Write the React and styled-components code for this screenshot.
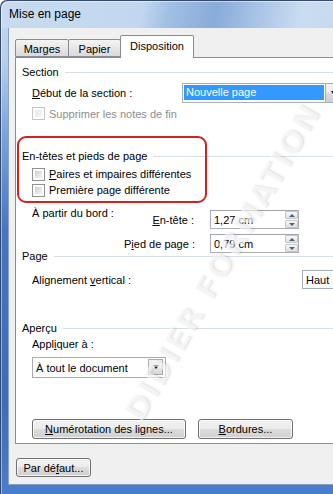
import React from "react";
import styled, { createGlobalStyle } from "styled-components";

const Global = createGlobalStyle`
  html, body { margin: 0; padding: 0; overflow: hidden; background: #ffffff; }
  body { font-family: "Liberation Sans", Arial, sans-serif; font-size: 11px; color: #000; }
  * { box-sizing: border-box; }
`;

const Window = styled.div`
  position: relative;
  width: 430px;
  height: 494px;
  overflow: hidden;
  border-top-left-radius: 7px;
  display: flex;
  flex-direction: column;
  background: linear-gradient(180deg, #c4d9f0 0px, #b7cfec 60px, #7ea6dc 130px, #4376c6 230px, #3a6cc0 400px, #4a7dcb 494px);
  box-shadow: inset 1px 1px 0 #34496b, inset 2px 2px 0 rgba(255, 255, 255, 0.45);
`;

const TitleBar = styled.div`
  height: 28px;
  flex: none;
  padding-left: 9px;
  display: flex;
  align-items: center;
  font-size: 12px;
  color: #000;
  border-top-left-radius: 7px;
  background: linear-gradient(100deg, #c8dbf0 0%, #c2d7ef 33%, #a3c0e4 39%, #88abd9 50%, #a6c2e5 59%, #cadcf1 70%, #bdd3ed 100%);
  box-shadow: inset 1px 1px 0 #34496b, inset 2px 2px 0 rgba(255, 255, 255, 0.5);
`;

const Client = styled.div`
  flex: none;
  height: 457px;
  margin-left: 8px;
  background: #f0f0f0;
  border-left: 1px solid #8aa0bd;
  border-bottom: 1px solid #8aa0bd;
  padding: 7px 0 0 6px;
  display: flex;
  flex-direction: column;
`;

const TabStrip = styled.div`
  display: flex;
  align-items: flex-end;
  height: 22px;
  position: relative;
  z-index: 2;
`;

const Tab = styled.div`
  width: ${(p) => p.$w}px;
  height: ${(p) => (p.$active ? 23 : 18)}px;
  margin-left: ${(p) => (p.$first ? 0 : -1)}px;
  margin-bottom: ${(p) => (p.$active ? -1 : 0)}px;
  border: 1px solid #898c95;
  border-bottom: ${(p) => (p.$active ? "none" : "1px solid #898c95")};
  border-radius: 2px 2px 0 0;
  background: ${(p) => (p.$active ? "#ffffff" : "linear-gradient(180deg, #f4f4f4 0%, #e8e8e8 45%, #dadada 100%)")};
  display: flex;
  align-items: center;
  justify-content: center;
  padding-top: ${(p) => (p.$active ? 0 : 2)}px;
  padding-bottom: ${(p) => (p.$active ? 3 : 0)}px;
  font-size: 11px;
  position: relative;
  z-index: ${(p) => (p.$active ? 2 : 1)};
`;

const Panel = styled.div`
  position: relative;
  z-index: 1;
  height: 387px;
  background: #ffffff;
  border: 1px solid #898c95;
  border-right: none;
  padding-left: 6px;
  display: flex;
  flex-direction: column;
`;

const GroupHeading = styled.div`
  display: flex;
  align-items: center;
  height: 14px;
  margin-top: ${(p) => p.$top}px;
  &::after {
    content: "";
    flex: 1;
    height: 1px;
    margin-left: 6px;
    background: #d5dfe5;
  }
`;

const Row = styled.div`
  display: flex;
  align-items: ${(p) => p.$align || "center"};
  height: ${(p) => p.$h}px;
  margin-top: ${(p) => p.$top}px;
  padding-left: 10px;
`;

const Label = styled.span`
  width: ${(p) => (p.$w ? `${p.$w}px` : "auto")};
  flex: none;
  line-height: 14px;
  white-space: nowrap;
  color: ${(p) => (p.$disabled ? "#8d8d8d" : "#000")};
  padding-top: ${(p) => p.$pt || 0}px;
  text-align: ${(p) => (p.$right ? "right" : "left")};
`;

const U = styled.span`
  text-decoration: underline;
  text-underline-offset: 1px;
`;

const ListCombo = styled.div`
  width: 161px;
  height: 20px;
  border: 1px solid #a5acb5;
  background: #ffffff;
  display: flex;
  padding: 1px 0 2px 1px;
`;

const Highlight = styled.div`
  flex: 1;
  background: #3399ff;
  color: #ffffff;
  padding-left: 2px;
  line-height: 15px;
  margin-right: 1px;
`;

const ComboArrow = styled.div`
  width: 17px;
  margin-top: -1px;
  margin-bottom: -2px;
  border-left: 1px solid #a5acb5;
  background: linear-gradient(180deg, #f2f2f2 0%, #ebebeb 50%, #dddddd 50%, #cfcfcf 100%);
  display: flex;
  align-items: center;
  justify-content: center;
`;

const Caret = styled.span`
  width: 0;
  height: 0;
  border-left: 3.5px solid transparent;
  border-right: 3.5px solid transparent;
  border-top: 4px solid #000;
`;

const CheckBox = styled.span`
  width: 13px;
  height: 13px;
  flex: none;
  border: 1px solid ${(p) => (p.$disabled ? "#c5c5c5" : "#8e8f8f")};
  background: #ffffff;
  padding: 2px;
  margin-right: 4px;
  &::after {
    content: "";
    display: block;
    width: 100%;
    height: 100%;
    background: ${(p) =>
      p.$disabled
        ? "linear-gradient(135deg, #e6e6e6, #f8f8f8)"
        : "linear-gradient(135deg, #cbcbcb 0%, #e2e2e2 50%, #f6f6f6 100%)"};
  }
`;

const Annotation = styled.div`
  position: absolute;
  left: 1px;
  top: 78px;
  width: 190px;
  height: 67px;
  border: 2px solid #d2231f;
  border-radius: 9px;
  pointer-events: none;
`;

const EdgeBlock = styled.div`
  display: flex;
  margin-top: ${(p) => p.$top}px;
  padding-left: 10px;
`;

const EdgeGrid = styled.div`
  display: grid;
  grid-template-columns: 70px 89px;
  column-gap: 16px;
  row-gap: 5px;
  margin-top: 4px;
  align-items: center;
`;

const SpinBox = styled.div`
  width: 89px;
  height: 19px;
  border: 1px solid #abadb3;
  border-top-color: #a0a3aa;
  background: #ffffff;
  display: flex;
  align-items: center;
  padding-left: 3px;
`;

const SpinText = styled.span`
  flex: 1;
  line-height: 14px;
`;

const SpinCol = styled.div`
  display: flex;
  flex-direction: column;
  width: 13px;
  height: 17px;
  gap: 1px;
`;

const SpinBtn = styled.div`
  flex: 1;
  border: 1px solid #c2c6cc;
  border-radius: 1px;
  background: linear-gradient(180deg, #f8f8f8 0%, #ececec 50%, #e0e0e0 100%);
  display: flex;
  align-items: center;
  justify-content: center;
`;

const TinyTri = styled.span`
  width: 0;
  height: 0;
  border-left: 3px solid transparent;
  border-right: 3px solid transparent;
  ${(p) => (p.$up ? "border-bottom: 3px solid #4d6185;" : "border-top: 3px solid #4d6185;")}
`;

const ValueBox = styled.div`
  width: ${(p) => p.$w}px;
  height: ${(p) => p.$h}px;
  border: 1px solid #a5acb5;
  background: #ffffff;
  display: flex;
  align-items: stretch;
  padding-left: 3px;
`;

const ValueText = styled.span`
  flex: 1;
  display: flex;
  align-items: center;
`;

const DropBtn = styled.div`
  width: 15px;
  margin: 1px 2px 2px 0;
  border: 1px solid #a5acb5;
  background: linear-gradient(180deg, #f4f4f4 0%, #e8e8e8 50%, #d9d9d9 100%);
  display: flex;
  align-items: center;
  justify-content: center;
`;

const ButtonRow = styled.div`
  display: flex;
  gap: 12px;
  margin-top: ${(p) => p.$top}px;
  padding-left: ${(p) => p.$pl || 0}px;
`;

const Button = styled.div`
  width: ${(p) => p.$w}px;
  height: ${(p) => p.$h || 20}px;
  border: 1px solid #707070;
  border-radius: 3px;
  background: linear-gradient(180deg, #f2f2f2 0%, #ebebeb 50%, #dddddd 50%, #cfcfcf 100%);
  box-shadow: inset 0 0 0 1px rgba(255, 255, 255, 0.75);
  display: flex;
  align-items: center;
  justify-content: center;
  font-size: 11px;
  white-space: nowrap;
`;

const Watermark = styled.div`
  position: absolute;
  left: 222px;
  top: 262px;
  transform: translate(-50%, -50%) rotate(-60deg);
  white-space: nowrap;
  font-family: "DejaVu Sans", sans-serif;
  font-weight: bold;
  font-size: 30px;
  letter-spacing: 2px;
  color: rgba(255, 255, 255, 0.6);
  text-shadow: 1px 1px 0 rgba(170, 170, 170, 0.16), 2px 2px 2px rgba(150, 150, 150, 0.14);
  pointer-events: none;
  z-index: 5;
`;

export default function App() {
  return (
    <>
      <Global />
      <Window>
        <TitleBar>Mise en page</TitleBar>
        <Client>
          <TabStrip>
            <Tab $w={54} $first>Marges</Tab>
            <Tab $w={53}>Papier</Tab>
            <Tab $w={74} $active>Disposition</Tab>
          </TabStrip>
          <Panel>
            <GroupHeading $top={7}>Section</GroupHeading>
            <Row $h={21} $top={3}>
              <Label $w={150}>
                <U>D</U>ébut de la section :
              </Label>
              <ListCombo>
                <Highlight>Nouvelle page</Highlight>
                <ComboArrow>
                  <Caret />
                </ComboArrow>
              </ListCombo>
            </Row>
            <Row $h={13} $top={4}>
              <CheckBox $disabled />
              <Label $disabled>Supprimer les notes de fin</Label>
            </Row>

            <GroupHeading $top={29}>En-têtes et pieds de page</GroupHeading>
            <Row $h={16} $top={3}>
              <CheckBox />
              <Label>
                <U>P</U>aires et impaires différentes
              </Label>
            </Row>
            <Row $h={16} $top={0}>
              <CheckBox />
              <Label>Première page différente</Label>
            </Row>

            <EdgeBlock $top={8}>
              <Label $w={92}>À partir du bord :</Label>
              <EdgeGrid>
                <Label $right>
                  <U>E</U>n-tête :
                </Label>
                <SpinBox>
                  <SpinText>1,27 cm</SpinText>
                  <SpinCol>
                    <SpinBtn><TinyTri $up /></SpinBtn>
                    <SpinBtn><TinyTri /></SpinBtn>
                  </SpinCol>
                </SpinBox>
                <Label $right>
                  P<U>i</U>ed de page :
                </Label>
                <SpinBox>
                  <SpinText>0,79 cm</SpinText>
                  <SpinCol>
                    <SpinBtn><TinyTri $up /></SpinBtn>
                    <SpinBtn><TinyTri /></SpinBtn>
                  </SpinCol>
                </SpinBox>
              </EdgeGrid>
            </EdgeBlock>

            <GroupHeading $top={-4}>Page</GroupHeading>
            <Row $h={19} $top={7}>
              <Label $w={270}>
                Alignement <U>v</U>ertical :
              </Label>
              <ValueBox $w={80} $h={19}>
                <ValueText>Haut</ValueText>
              </ValueBox>
            </Row>

            <GroupHeading $top={32}>Aperçu</GroupHeading>
            <Row $h={14} $top={2}>
              <Label>
                Appl<U>i</U>quer à :
              </Label>
            </Row>
            <Row $h={21} $top={6}>
              <ValueBox $w={134} $h={21}>
                <ValueText>À tout le document</ValueText>
                <DropBtn>
                  <Caret />
                </DropBtn>
              </ValueBox>
            </Row>

            <ButtonRow $top={41} $pl={10}>
              <Button $w={154}>
                <U>N</U>umérotation des lignes...
              </Button>
              <Button $w={95}>
                <U>B</U>ordures...
              </Button>
            </ButtonRow>

            <Annotation />
          </Panel>
          <ButtonRow $top={14} $pl={1}>
            <Button $w={75} $h={19}>
              Par dé<U>f</U>aut...
            </Button>
          </ButtonRow>
        </Client>
        <Watermark>DIDIER FORMATION</Watermark>
      </Window>
    </>
  );
}
